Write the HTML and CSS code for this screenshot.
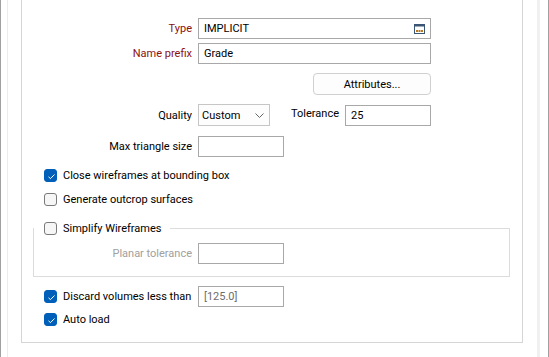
FILE: index.html
```html
<!DOCTYPE html>
<html lang="en">
<head>
    <meta charset="UTF-8">
    <title>Implicit wireframes</title>
    <link rel="stylesheet" href="styles.css">
</head>
<body>

<div class="window">
    <div class="edge"></div>
    <div class="panel">

        <div class="row row-type">
            <label class="lbl lbl-req">Type</label>
            <div class="field wide">
                <span>IMPLICIT</span>
                <svg class="browse" width="11" height="10" viewBox="0 0 11 10">
                    <rect x="0.5" y="0.5" width="10" height="9" fill="#fff" stroke="#3a5675"/>
                    <rect x="0.5" y="0.5" width="10" height="2" fill="#3a5675"/>
                    <rect x="2" y="6" width="2" height="2" fill="#b77a1e"/>
                    <rect x="4.5" y="6" width="2" height="2" fill="#b77a1e"/>
                    <rect x="7" y="6" width="2" height="2" fill="#b77a1e"/>
                </svg>
            </div>
        </div>

        <div class="row row-name">
            <label class="lbl lbl-req">Name prefix</label>
            <div class="field wide"><span>Grade</span></div>
        </div>

        <div class="row row-attr">
            <span></span>
            <div class="btn-line"><button class="btn">Attributes...</button></div>
        </div>

        <div class="row row-quality">
            <label class="lbl">Quality</label>
            <div class="quality-line">
                <div class="select">
                    <span>Custom</span>
                    <svg width="9" height="5" viewBox="0 0 9 5"><path d="M0.5 0.5 L4.5 4.5 L8.5 0.5" fill="none" stroke="#666" stroke-width="1"/></svg>
                </div>
                <label class="lbl-tol">Tolerance</label>
                <div class="field short"><span>25</span></div>
            </div>
        </div>

        <div class="row row-max">
            <label class="lbl">Max triangle size</label>
            <div class="field short"></div>
        </div>

        <div class="check row-close">
            <span class="box on"></span>Close wireframes at bounding box
        </div>
        <div class="check row-gen">
            <span class="box"></span>Generate outcrop surfaces
        </div>

        <div class="group">
            <div class="check group-title">
                <span class="box"></span>Simplify Wireframes
            </div>
            <div class="row row-planar">
                <label class="lbl lbl-off">Planar tolerance</label>
                <div class="field short"></div>
            </div>
        </div>

        <div class="row row-discard">
            <div class="check check-inline"><span class="box on"></span>Discard volumes less than</div>
            <div class="field short"><span class="muted">[125.0]</span></div>
        </div>
        <div class="check row-auto">
            <span class="box on"></span>Auto load
        </div>

    </div>
    <div class="band"></div>
</div>

</body>
</html>
```

FILE: styles.css
```css
body {
    margin: 0;
    background-color: #fff;
    font-family: Roboto, "Liberation Sans", sans-serif;
    font-size: 11px;
    color: #000;
}
.window {
    display: flex;
    width: 549px;
    height: 357px;
    box-sizing: border-box;
    border-left: 1px solid #a0a0a0;
    border-right: 1px solid #a0a0a0;
}
.edge {
    width: 1px;
    margin-left: 6px;
    background-color: #ececec;
}
.panel {
    width: 502px;
    height: 343px;
    margin-left: 13px;
    box-sizing: border-box;
    border: 1px solid #d5d5d5;
    border-top: none;
    padding-top: 18px;
}
.band {
    width: 3px;
    margin-left: 14px;
    background-color: #f0f0f0;
}

/* label / field rows */
.row {
    display: grid;
    grid-template-columns: 170px auto;
    column-gap: 6px;
    align-items: center;
    height: 21px;
}
.lbl {
    text-align: right;
    white-space: nowrap;
}
.lbl-req {
    color: #8b1010;
}
.lbl-off {
    color: #a0a0a0;
}
.field {
    display: flex;
    align-items: center;
    justify-content: space-between;
    height: 21px;
    box-sizing: border-box;
    border: 1px solid #a8a8a8;
    padding: 0 5px 0 5px;
    background-color: #fff;
}
.wide { width: 233px; }
.short { width: 86px; }
.muted { color: #6d6d6d; }

.row-name { margin-top: 4px; }
.row-attr {
    margin-top: 9px;
    height: 22px;
}
.btn-line {
    display: flex;
    justify-content: flex-end;
    width: 233px;
}
.btn {
    width: 118px;
    height: 22px;
    border: 1px solid #d0d0d0;
    border-radius: 4px;
    background-color: #fdfdfd;
    font-family: inherit;
    font-size: inherit;
    padding: 0;
}
.row-quality {
    margin-top: 9px;
    height: 22px;
}
.quality-line {
    display: flex;
    align-items: center;
    width: 233px;
}
.select {
    display: flex;
    align-items: center;
    justify-content: space-between;
    width: 72px;
    height: 22px;
    box-sizing: border-box;
    border: 1px solid #c6c6c6;
    padding: 0 5px 0 3px;
    background-color: #fdfdfd;
}
.lbl-tol {
    flex: 1;
    text-align: right;
    margin-right: 6px;
    margin-top: -3px;
}
.row-max { margin-top: 10px; }

/* checkboxes */
.check {
    display: flex;
    align-items: center;
    height: 16px;
    padding-left: 22px;
    white-space: nowrap;
}
.box {
    width: 13px;
    height: 13px;
    box-sizing: border-box;
    border: 1px solid #7a7a7a;
    border-radius: 3px;
    background-color: #f6f6f6;
    margin-right: 6px;
    flex-shrink: 0;
}
.box.on {
    border-color: #005fb8;
    background-color: #005fb8;
    background-image: url("data:image/svg+xml;utf8,<svg xmlns='http://www.w3.org/2000/svg' width='13' height='13'><path d='M3.5 6.8 L5.5 8.6 L9.5 4.5' fill='none' stroke='white' stroke-width='1'/></svg>");
}
.row-close { margin-top: 10px; }
.row-gen { margin-top: 8px; }

.group {
    position: relative;
    width: 477px;
    height: 49px;
    box-sizing: border-box;
    margin-top: 21px;
    margin-left: 11px;
    border: 1px solid #dcdcdc;
}
.group-title {
    position: absolute;
    top: -9px;
    left: 0;
    padding-left: 10px;
    padding-right: 8px;
    background-color: #fff;
}
.row-planar {
    margin-top: 14px;
    margin-left: -12px;
}
.row-discard { margin-top: 9px; }
.check-inline {
    padding-left: 22px;
}
.row-auto { margin-top: 4px; }
```
